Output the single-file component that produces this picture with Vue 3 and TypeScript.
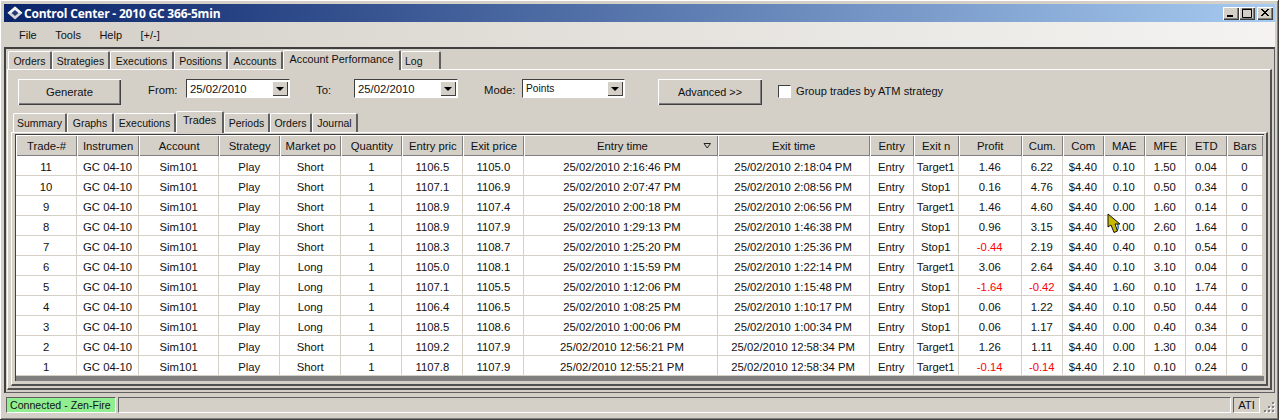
<script setup lang="ts">
interface Trade {
  id: number
  side: string
  entry: string
  exit: string
  inTime: string
  outTime: string
  target: string
  profit: string
  cum: string
  mae: string
  mfe: string
  etd: string
}

const mainTabs = [
  { name: 'Orders', w: 44 },
  { name: 'Strategies', w: 58 },
  { name: 'Executions', w: 64 },
  { name: 'Positions', w: 54 },
  { name: 'Accounts', w: 55 },
  { name: 'Account Performance', w: 118, active: true },
  { name: 'Log', w: 40, left: true },
]
const subTabs = [
  { name: 'Summary', w: 54 },
  { name: 'Graphs', w: 47 },
  { name: 'Executions', w: 62 },
  { name: 'Trades', w: 48, active: true },
  { name: 'Periods', w: 46 },
  { name: 'Orders', w: 42 },
  { name: 'Journal', w: 46 },
]

const columns = [
  { name: 'Trade-#', w: 61 },
  { name: 'Instrumen', w: 62 },
  { name: 'Account', w: 80 },
  { name: 'Strategy', w: 61 },
  { name: 'Market po', w: 61 },
  { name: 'Quantity', w: 61 },
  { name: 'Entry pric', w: 61 },
  { name: 'Exit price', w: 61 },
  { name: 'Entry time', w: 193, sorted: true },
  { name: 'Exit time', w: 152 },
  { name: 'Entry', w: 44 },
  { name: 'Exit n', w: 45 },
  { name: 'Profit', w: 63 },
  { name: 'Cum.', w: 41 },
  { name: 'Com', w: 41 },
  { name: 'MAE', w: 41 },
  { name: 'MFE', w: 41 },
  { name: 'ETD', w: 41 },
  { name: 'Bars', w: 36 },
]

const day = '25/02/2010 '
const trades: Trade[] = [
  { id: 11, side: 'Short', entry: '1106.5', exit: '1105.0', inTime: '2:16:46 PM', outTime: '2:18:04 PM', target: 'Target1', profit: '1.46', cum: '6.22', mae: '0.10', mfe: '1.50', etd: '0.04' },
  { id: 10, side: 'Short', entry: '1107.1', exit: '1106.9', inTime: '2:07:47 PM', outTime: '2:08:56 PM', target: 'Stop1', profit: '0.16', cum: '4.76', mae: '0.10', mfe: '0.50', etd: '0.34' },
  { id: 9, side: 'Short', entry: '1108.9', exit: '1107.4', inTime: '2:00:18 PM', outTime: '2:06:56 PM', target: 'Target1', profit: '1.46', cum: '4.60', mae: '0.00', mfe: '1.60', etd: '0.14' },
  { id: 8, side: 'Short', entry: '1108.9', exit: '1107.9', inTime: '1:29:13 PM', outTime: '1:46:38 PM', target: 'Stop1', profit: '0.96', cum: '3.15', mae: '0.00', mfe: '2.60', etd: '1.64' },
  { id: 7, side: 'Short', entry: '1108.3', exit: '1108.7', inTime: '1:25:20 PM', outTime: '1:25:36 PM', target: 'Stop1', profit: '-0.44', cum: '2.19', mae: '0.40', mfe: '0.10', etd: '0.54' },
  { id: 6, side: 'Long', entry: '1105.0', exit: '1108.1', inTime: '1:15:59 PM', outTime: '1:22:14 PM', target: 'Target1', profit: '3.06', cum: '2.64', mae: '0.10', mfe: '3.10', etd: '0.04' },
  { id: 5, side: 'Long', entry: '1107.1', exit: '1105.5', inTime: '1:12:06 PM', outTime: '1:15:48 PM', target: 'Stop1', profit: '-1.64', cum: '-0.42', mae: '1.60', mfe: '0.10', etd: '1.74' },
  { id: 4, side: 'Long', entry: '1106.4', exit: '1106.5', inTime: '1:08:25 PM', outTime: '1:10:17 PM', target: 'Stop1', profit: '0.06', cum: '1.22', mae: '0.10', mfe: '0.50', etd: '0.44' },
  { id: 3, side: 'Long', entry: '1108.5', exit: '1108.6', inTime: '1:00:06 PM', outTime: '1:00:34 PM', target: 'Stop1', profit: '0.06', cum: '1.17', mae: '0.00', mfe: '0.40', etd: '0.34' },
  { id: 2, side: 'Short', entry: '1109.2', exit: '1107.9', inTime: '12:56:21 PM', outTime: '12:58:34 PM', target: 'Target1', profit: '1.26', cum: '1.11', mae: '0.00', mfe: '1.30', etd: '0.04' },
  { id: 1, side: 'Short', entry: '1107.8', exit: '1107.9', inTime: '12:55:21 PM', outTime: '12:58:34 PM', target: 'Target1', profit: '-0.14', cum: '-0.14', mae: '2.10', mfe: '0.10', etd: '0.24' },
]

const isNeg = (v: string) => v.startsWith('-')
</script>

<template>
  <div class="window">
    <div class="titlebar">
      <svg class="logo" width="16" height="14" viewBox="0 0 16 14">
        <path d="M8 .5 15.500 7 8 13.500 .5 7Z" fill="#d8d8d8" />
        <path d="M8 .5 15.500 7H.5Z" fill="#f4f4f4" />
        <path d="M8 4 11.500 7 8 10 4.500 7Z" fill="#243c78" />
      </svg>
      <span class="title">Control Center - 2010 GC 366-5min</span>
      <div class="caption-btns">
        <button class="cap"><svg width="10" height="10"><rect x="1" y="7" width="6" height="2" fill="#000" /></svg></button>
        <button class="cap"><svg width="10" height="10"><path d="M.5 1.500h9v8h-9zM0 1h10" fill="none" stroke="#000" /></svg></button>
        <button class="cap close"><svg width="10" height="10"><path d="M1 1 8 8M2 1 9 8M8 1 1 8M9 1 2 8" stroke="#000" /></svg></button>
      </div>
    </div>
    <div class="menubar">
      <span>File</span>
      <span>Tools</span>
      <span>Help</span>
      <span>[+/-]</span>
    </div>

    <div class="outer">
      <div class="tabs main-tabs">
        <div v-for="t in mainTabs" :key="t.name" class="tab" :class="{ active: t.active, left: t.left }" :style="{ width: t.w + 'px' }">{{ t.name }}</div>
      </div>
      <div class="page">
        <div class="toolbar">
          <button class="btn generate">Generate</button>
          <label class="lbl from">From:</label>
          <div class="combo date"><span>25/02/2010</span><i class="arrow"></i></div>
          <label class="lbl to">To:</label>
          <div class="combo date"><span>25/02/2010</span><i class="arrow"></i></div>
          <label class="lbl mode">Mode:</label>
          <div class="combo modesel"><span>Points</span><i class="arrow"></i></div>
          <button class="btn advanced">Advanced &gt;&gt;</button>
          <div class="check"></div>
          <span class="check-label">Group trades by ATM strategy</span>
        </div>

        <div class="tabs sub-tabs">
          <div v-for="t in subTabs" :key="t.name" class="tab" :class="{ active: t.active }" :style="{ width: t.w + 'px' }">{{ t.name }}</div>
        </div>
        <div class="subpage">
          <div class="grid">
            <table>
              <colgroup>
                <col v-for="c in columns" :key="c.name" :style="{ width: c.w + 'px' }" />
              </colgroup>
              <thead>
                <tr>
                  <th v-for="c in columns" :key="c.name" :class="{ shift: c.sorted }">
                    {{ c.name }}
                    <svg v-if="c.sorted" class="sort" width="9" height="7"><path d="M1 1.500h6.500L4.200 6z" fill="none" stroke="#222" /></svg>
                  </th>
                </tr>
              </thead>
              <tbody>
                <tr v-for="t in trades" :key="t.id">
                  <td>{{ t.id }}</td>
                  <td>GC 04-10</td>
                  <td>Sim101</td>
                  <td>Play</td>
                  <td>{{ t.side }}</td>
                  <td>1</td>
                  <td>{{ t.entry }}</td>
                  <td>{{ t.exit }}</td>
                  <td class="shift">{{ day + t.inTime }}</td>
                  <td>{{ day + t.outTime }}</td>
                  <td>Entry</td>
                  <td>{{ t.target }}</td>
                  <td :class="{ neg: isNeg(t.profit) }">{{ t.profit }}</td>
                  <td :class="{ neg: isNeg(t.cum) }">{{ t.cum }}</td>
                  <td>$4.40</td>
                  <td>{{ t.mae }}</td>
                  <td>{{ t.mfe }}</td>
                  <td>{{ t.etd }}</td>
                  <td>0</td>
                </tr>
              </tbody>
            </table>
            <div class="grid-bottom"></div>
          </div>
        </div>
      </div>
    </div>

    <div class="statusbar">
      <div class="st connected">Connected - Zen-Fire</div>
      <div class="st fill"></div>
      <div class="st ati">ATI</div>
      <svg class="grip" width="13" height="13" viewBox="0 0 13 13">
        <g fill="#fff">
          <rect x="11" y="3" width="2" height="2" /><rect x="7" y="7" width="2" height="2" /><rect x="11" y="7" width="2" height="2" />
          <rect x="3" y="11" width="2" height="2" /><rect x="7" y="11" width="2" height="2" /><rect x="11" y="11" width="2" height="2" />
        </g>
        <g fill="#808080">
          <rect x="10" y="2" width="2" height="2" /><rect x="6" y="6" width="2" height="2" /><rect x="10" y="6" width="2" height="2" />
          <rect x="2" y="10" width="2" height="2" /><rect x="6" y="10" width="2" height="2" /><rect x="10" y="10" width="2" height="2" />
        </g>
      </svg>
    </div>

    <svg class="cursor" width="15" height="21" viewBox="0 0 15 21">
      <path d="M1 1V14L4 12 7 19.500 10.500 18 8 11H13Z" fill="#c9b800" stroke="#111" stroke-width="1" />
    </svg>
  </div>
</template>

<style scoped>
.window {
  position: relative;
  box-sizing: border-box;
  width: 1279px;
  height: 420px;
  padding: 4px 3px 6px 4px;
  display: flex;
  flex-direction: column;
  background: #d4d0c8;
  font: 11.3px "Liberation Sans", Arial, sans-serif;
  color: #111;
  border-right: 1px solid #404040;
  border-bottom: 1px solid #404040;
  box-shadow: inset 1px 1px 0 #fff, inset -1px -1px 0 #808080;
  overflow: hidden;
}

.titlebar {
  height: 18px;
  flex: none;
  display: flex;
  align-items: center;
  background: linear-gradient(90deg, #0a246a, #a6caf0);
}
.logo {
  margin-left: 3px;
  flex: none;
}
.title {
  margin-left: 1px;
  font: bold 12px "Open Sans", sans-serif;
  letter-spacing: -0.2px;
  color: #fff;
  white-space: nowrap;
}
.caption-btns {
  margin-left: auto;
  margin-right: 2px;
  display: flex;
}
.cap {
  width: 16px;
  height: 13px;
  padding: 0;
  display: flex;
  align-items: center;
  justify-content: center;
  background: #d4d0c8;
  border: none;
  box-shadow: inset 1px 1px 0 #fff, inset -1px -1px 0 #404040, inset -2px -2px 0 #808080;
}
.close {
  margin-left: 2px;
}

.menubar {
  height: 25px;
  flex: none;
  box-sizing: border-box;
  display: flex;
  align-items: center;
  padding: 1px 0 0 15px;
  gap: 18.500px;
  font-size: 11px;
  background: linear-gradient(90deg, #d4d0c8, #f4f3f1);
}

.outer {
  flex: 1;
  min-height: 0;
  display: flex;
  flex-direction: column;
  border-top: 2px solid #404040;
  border-left: 2px solid #404040;
  border-right: 1px solid #606060;
  border-bottom: 1px solid #606060;
  padding: 0 2px 2px 1px;
}

.tabs {
  display: flex;
  flex: none;
  align-items: flex-end;
  font-size: 10.500px;
}
.main-tabs {
  height: 20px;
  padding-left: 1px;
}
.sub-tabs {
  height: 21px;
  padding-left: 2px;
}
.tab {
  box-sizing: border-box;
  line-height: 18px;
  text-align: center;
  white-space: nowrap;
  border-top: 1px solid #fff;
  border-left: 1px solid #fff;
  border-right: 2px solid #606060;
  border-radius: 2px 2px 0 0;
}
.tab.left {
  text-align: left;
  padding-left: 3px;
}
.main-tabs .tab {
  height: 18px;
}
.sub-tabs .tab {
  height: 19px;
}
.tabs .tab.active {
  position: relative;
  z-index: 1;
  margin-bottom: -1px;
  line-height: 17px;
  font-size: 10.800px;
  background: #d4d0c8;
}
.main-tabs .tab.active {
  height: 20px;
}
.sub-tabs .tab.active {
  height: 22px;
}

.page {
  flex: 1;
  min-height: 0;
  display: flex;
  flex-direction: column;
  border-top: 1px solid #fff;
  border-left: 1px solid #fff;
  border-right: 2px solid #505050;
  border-bottom: 2px solid #505050;
  padding: 0 2px 2px 3px;
}

.toolbar {
  height: 41px;
  flex: none;
  display: flex;
  align-items: flex-start;
  padding-top: 9px;
  box-sizing: border-box;
}
.btn {
  height: 26px;
  padding: 0;
  background: #d4d0c8;
  font: inherit;
  color: inherit;
  border: none;
  box-shadow: inset 1px 1px 0 #fff, inset -1px -1px 0 #404040, inset -2px -2px 0 #808080;
}
.generate {
  width: 103px;
  margin-left: 7px;
}
.lbl {
  line-height: 22px;
}
.from {
  margin-left: 27px;
  width: 38px;
}
.to {
  margin-left: 26px;
  width: 38px;
}
.mode {
  margin-left: 26px;
  width: 38px;
}
.combo {
  box-sizing: border-box;
  height: 19px;
  display: flex;
  align-items: center;
  justify-content: space-between;
  padding-left: 3px;
  background: #fff;
  border-top: 1px solid #404040;
  border-left: 1px solid #404040;
  border-right: 1px solid #fff;
  border-bottom: 1px solid #fff;
}
.date {
  width: 104px;
}
.modesel {
  width: 103px;
  font-size: 10.200px;
}
.arrow {
  position: relative;
  width: 16px;
  height: 15px;
  margin-right: 1px;
  background: #d4d0c8;
  box-shadow: inset 1px 1px 0 #fff, inset -1px -1px 0 #404040;
}
.arrow::after {
  content: "";
  position: absolute;
  left: 4px;
  top: 6px;
  border: 4px solid transparent;
  border-top-color: #000;
  border-bottom: none;
}
.advanced {
  width: 104px;
  margin-left: 33px;
  font-size: 10.900px;
}
.check {
  box-sizing: border-box;
  width: 13px;
  height: 13px;
  margin: 6px 0 0 16px;
  background: #fff;
  border-top: 1px solid #404040;
  border-left: 1px solid #404040;
  border-right: 1px solid #fff;
  border-bottom: 1px solid #fff;
}
.check-label {
  margin-left: 5px;
  line-height: 24px;
  font-size: 11.100px;
}

.subpage {
  flex: 1;
  min-height: 0;
  border-top: 1px solid #fff;
  border-left: 1px solid #fff;
  border-right: 2px solid #505050;
  border-bottom: 2px solid #505050;
  padding: 1px 2px 0 3px;
}
.grid {
  border-top: 1px solid #404040;
  border-left: 1px solid #404040;
}
table {
  table-layout: fixed;
  width: 1247px;
  border-collapse: separate;
  border-spacing: 0;
  background: #fff;
}
th {
  position: relative;
  height: 21px;
  padding: 0;
  font-weight: normal;
  background: #d4d0c8;
  box-shadow: inset 1px 1px 0 #fff, inset -1px -1px 0 #808080;
  white-space: nowrap;
  overflow: hidden;
}
.sort {
  position: absolute;
  right: 6px;
  top: 7px;
}
td {
  box-sizing: border-box;
  height: 20px;
  padding: 2px 0 0;
  text-align: center;
  white-space: nowrap;
  overflow: hidden;
  border-right: 1px solid #d4d0c8;
  border-bottom: 1px solid #d4d0c8;
}
th.shift,
td.shift {
  padding-left: 3px;
}
.neg {
  color: #ff0000;
}
.grid-bottom {
  height: 5px;
  background: #808080;
}

.statusbar {
  height: 16px;
  flex: none;
  margin: 4px 0 0 2px;
  display: flex;
  gap: 2px;
  align-items: stretch;
}
.st {
  box-sizing: border-box;
  line-height: 15px;
  white-space: nowrap;
  border-top: 1px solid #606060;
  border-left: 1px solid #606060;
  border-right: 1px solid #fff;
  border-bottom: 1px solid #fff;
}
.connected {
  width: 110px;
  padding-left: 3px;
  font-size: 10.600px;
  background: #90ee90;
}
.fill {
  flex: 1;
}
.ati {
  width: 27px;
  text-align: center;
}
.grip {
  flex: none;
  align-self: flex-end;
}
.cursor {
  position: absolute;
  left: 1107px;
  top: 213px;
}
</style>
